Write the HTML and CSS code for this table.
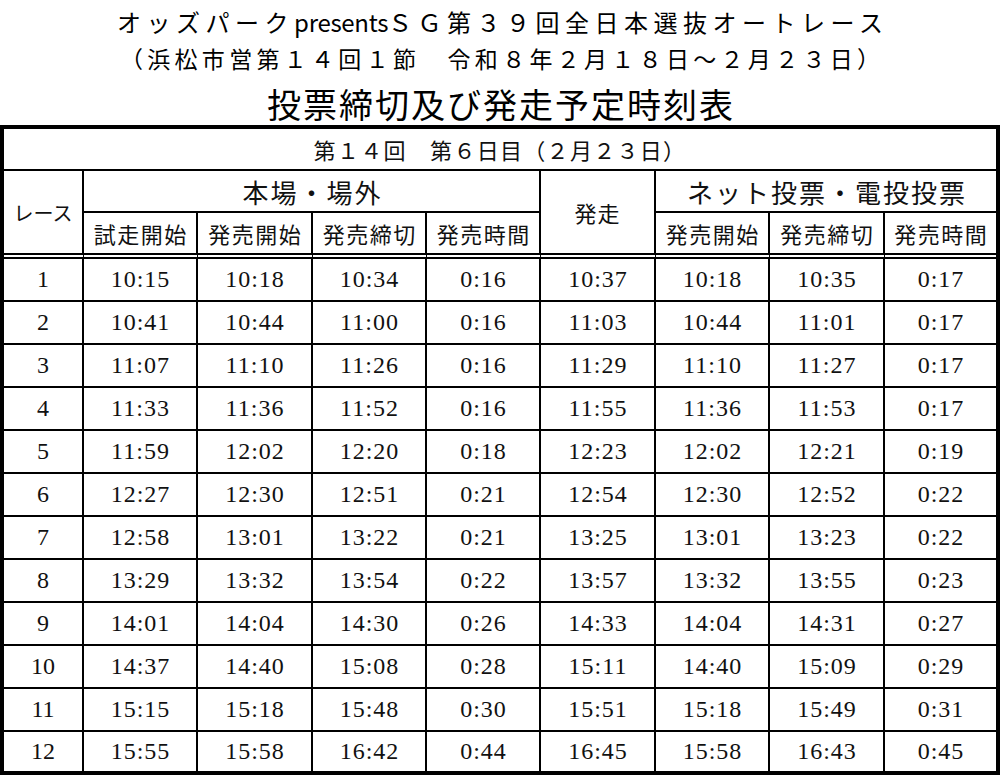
FILE: index.html
```html
<!DOCTYPE html>
<html lang="ja">
<head>
<meta charset="utf-8">
<title>投票締切及び発走予定時刻表</title>
<link rel="stylesheet" href="styles.css">
</head>
<body>
<header class="title">
  <div class="t1">オッズパーク<span class="latin">presents</span>ＳＧ第３９回全日本選抜オートレース</div>
  <div class="t2">（浜松市営第１４回１節　令和８年２月１８日～２月２３日）</div>
  <h1 class="t3">投票締切及び発走予定時刻表</h1>
</header>
<table class="tt">
  <colgroup>
    <col class="c-race">
    <col class="c114"><col class="c115"><col class="c114"><col class="c114">
    <col class="c115"><col class="c114"><col class="c115"><col class="c-last">
  </colgroup>
  <thead>
    <tr class="r-info"><td colspan="9" class="info last">第１４回　第６日目（２月２３日）</td></tr>
    <tr class="r-h1">
      <th rowspan="2" class="race-h dbl">レース</th>
      <th colspan="4" class="grp">本場・場外</th>
      <th rowspan="2" class="start-h dbl">発走</th>
      <th colspan="3" class="grp last">ネット投票・電投投票</th>
    </tr>
    <tr class="r-h2">
      <th class="sub dbl">試走開始</th>
      <th class="sub dbl">発売開始</th>
      <th class="sub dbl">発売締切</th>
      <th class="sub dbl">発売時間</th>
      <th class="sub dbl">発売開始</th>
      <th class="sub dbl">発売締切</th>
      <th class="sub dbl last">発売時間</th>
    </tr>
  </thead>
  <tbody>
    <tr><td class="no">1</td><td>10:15</td><td>10:18</td><td>10:34</td><td>0:16</td><td>10:37</td><td>10:18</td><td>10:35</td><td class="last">0:17</td></tr>
    <tr><td class="no">2</td><td>10:41</td><td>10:44</td><td>11:00</td><td>0:16</td><td>11:03</td><td>10:44</td><td>11:01</td><td class="last">0:17</td></tr>
    <tr><td class="no">3</td><td>11:07</td><td>11:10</td><td>11:26</td><td>0:16</td><td>11:29</td><td>11:10</td><td>11:27</td><td class="last">0:17</td></tr>
    <tr><td class="no">4</td><td>11:33</td><td>11:36</td><td>11:52</td><td>0:16</td><td>11:55</td><td>11:36</td><td>11:53</td><td class="last">0:17</td></tr>
    <tr><td class="no">5</td><td>11:59</td><td>12:02</td><td>12:20</td><td>0:18</td><td>12:23</td><td>12:02</td><td>12:21</td><td class="last">0:19</td></tr>
    <tr><td class="no">6</td><td>12:27</td><td>12:30</td><td>12:51</td><td>0:21</td><td>12:54</td><td>12:30</td><td>12:52</td><td class="last">0:22</td></tr>
    <tr><td class="no">7</td><td>12:58</td><td>13:01</td><td>13:22</td><td>0:21</td><td>13:25</td><td>13:01</td><td>13:23</td><td class="last">0:22</td></tr>
    <tr><td class="no">8</td><td>13:29</td><td>13:32</td><td>13:54</td><td>0:22</td><td>13:57</td><td>13:32</td><td>13:55</td><td class="last">0:23</td></tr>
    <tr><td class="no">9</td><td>14:01</td><td>14:04</td><td>14:30</td><td>0:26</td><td>14:33</td><td>14:04</td><td>14:31</td><td class="last">0:27</td></tr>
    <tr><td class="no">10</td><td>14:37</td><td>14:40</td><td>15:08</td><td>0:28</td><td>15:11</td><td>14:40</td><td>15:09</td><td class="last">0:29</td></tr>
    <tr><td class="no">11</td><td>15:15</td><td>15:18</td><td>15:48</td><td>0:30</td><td>15:51</td><td>15:18</td><td>15:49</td><td class="last">0:31</td></tr>
    <tr class="r-end"><td class="no">12</td><td>15:55</td><td>15:58</td><td>16:42</td><td>0:44</td><td>16:45</td><td>15:58</td><td>16:43</td><td class="last">0:45</td></tr>
  </tbody>
</table>
</body>
</html>
```

FILE: styles.css
```css
html, body {
  margin: 0;
  padding: 0;
  background: #fff;
}

body {
  color: #000;
  font-family: "Noto Sans CJK JP", sans-serif;
}

.title {
  text-align: center;
  padding-top: 3px;
}

.t1 {
  font-size: 24px;
  letter-spacing: 5.5px;
  text-indent: 5.5px;
  line-height: 38px;
  height: 38px;
  white-space: nowrap;
}

.t1 .latin {
  letter-spacing: -0.3px;
}

.t2 {
  font-size: 23px;
  letter-spacing: 4.3px;
  text-indent: 4.3px;
  line-height: 34px;
  height: 34px;
  white-space: nowrap;
}

.t3 {
  margin: 0;
  font-size: 34px;
  font-weight: 400;
  letter-spacing: 2px;
  text-indent: 2px;
  line-height: 42px;
  height: 42px;
  padding-top: 8px;
}

.tt {
  width: 1000px;
  border: 4px solid #000;
  border-collapse: separate;
  border-spacing: 0;
  table-layout: fixed;
  box-sizing: border-box;
}

.c-race { width: 80px; }
.c114 { width: 114px; }
.c115 { width: 115px; }
.c-last { width: 111px; }

.tt td,
.tt th {
  box-sizing: border-box;
  border-right: 2px solid #000;
  border-bottom: 2px solid #000;
  padding: 0;
  text-align: center;
  vertical-align: middle;
  font-weight: normal;
}

.tt .last {
  border-right: none;
}

.tt .dbl {
  border-bottom: 6px double #000;
}

.r-info { height: 42px; }
.r-h1 { height: 42px; }
.r-h2 { height: 46px; }

.info {
  font-family: "Noto Sans CJK JP", sans-serif;
  font-weight: 300;
  font-size: 22px;
  letter-spacing: 1.3px;
  color: #111;
}

.grp {
  font-family: "Noto Sans CJK JP", sans-serif;
  font-weight: 300;
  font-size: 26px;
  letter-spacing: 2px;
  text-indent: 2px;
  color: #111;
}

.sub {
  font-family: "Noto Sans CJK JP", sans-serif;
  font-weight: 300;
  font-size: 22px;
  letter-spacing: 1.5px;
  text-indent: 1.5px;
  color: #111;
}

.race-h {
  font-family: "Noto Sans CJK JP", sans-serif;
  font-weight: 300;
  font-size: 20px;
  color: #111;
}

.start-h {
  font-family: "Noto Sans CJK JP", sans-serif;
  font-weight: 300;
  font-size: 22px;
  letter-spacing: 1px;
  color: #111;
}

.tt tbody tr {
  height: 43px;
}

.tt tbody tr.r-end {
  height: 39px;
}

.tt tbody tr.r-end td {
  border-bottom: none;
}

.tt tbody td {
  font-family: "Liberation Serif", "Noto Sans CJK JP", serif;
  font-size: 24px;
  letter-spacing: 1px;
  text-indent: 1px;
  color: #111;
}

.tt tbody td.no {
  letter-spacing: 0;
  text-indent: 0;
}
```
